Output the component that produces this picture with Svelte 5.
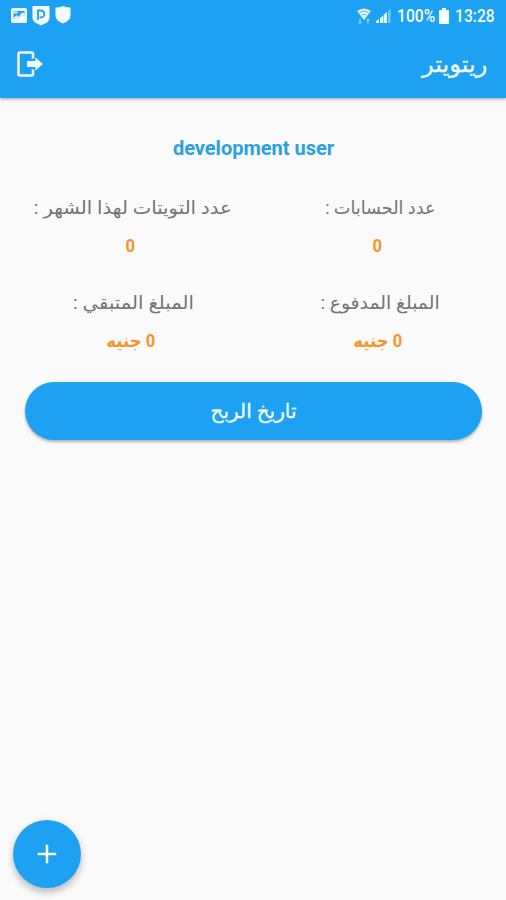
<script>
  const stats = [
    { label: 'عدد الحسابات :', value: '0', stretch: 0.98 },
    { label: 'عدد التويتات لهذا الشهر :', value: '0', stretch: 1.09 },
    { label: 'المبلغ المدفوع :', value: '0 جنيه', stretch: 1.045 },
    { label: 'المبلغ المتبقي :', value: '0 جنيه', stretch: 1.09 }
  ];
</script>

<div class="screen" dir="rtl">
  <header>
    <div class="status" dir="ltr">
      <div class="notices">
        <svg width="16" height="16" viewBox="0 0 16 16">
          <rect width="16" height="15" rx="2" fill="#f3faff" />
          <path d="M2.500 11.500V3h11v4.500L11 6.500l-3 3.500-2.500-1.500z" fill="#1da1f2" />
          <path d="M2.500 3.500h4v2h-4zM2.500 10l3-3 2.200 1.800L11 4.500l2.500.5v2.500L11 7l-3 4H2.500z" fill="#d8efff" />
        </svg>
        <svg width="18" height="20" viewBox="0 0 18 20">
          <path d="M.5 0h17v11.500q0 4-4.500 6l-4 2-4-2q-4.500-2-4.500-6z" fill="#f3faff" />
          <path d="M6 14V4.500H9a3.400 3.400 0 0 1 0 6.800H7.500" fill="none" stroke="#1da1f2" stroke-width="1.800" />
        </svg>
        <svg width="16" height="18" viewBox="0 0 16 18">
          <path d="M.5 1.500q4.500 0 7.500-1.500 3 1.500 7.500 1.500v8q0 5.500-7.500 8-7.500-2.500-7.500-8z" fill="#f3faff" />
        </svg>
      </div>
      <div class="system">
        <svg class="wifi" width="14" height="17" viewBox="0 0 14 17">
          <path d="M0 3q7-5 14 0L7 12z" fill="#e3f4ff" />
          <path d="M2.500 4.500q4.500-3 9 0M4.500 7q2.500-1.500 5 0" fill="none" stroke="#68bff5" />
          <path d="M3 11v4.500M1.500 14L3 15.500 4.500 14M11 15.500V11M9.500 12.500L11 11l1.500 1.500" fill="none" stroke="#b9e2fb" />
        </svg>
        <svg class="signal" width="15" height="14" viewBox="0 0 15 14">
          <path d="M0 14v-2l3-2v4zM4 14V9l3-2v7zM7.500 14V6L11 3v11z" fill="#eaf7ff" />
          <path d="M12 14V2l2.500-2v14z" fill="#79c7f7" />
        </svg>
        <span class="percent">100%</span>
        <svg class="battery" width="10" height="16" viewBox="0 0 10 16">
          <path d="M3 0h4v2h2q1 0 1 1v12q0 1-1 1H1q-1 0-1-1V3q0-1 1-1h2z" fill="#f6fbff" />
        </svg>
        <span class="clock">13:28</span>
      </div>
    </div>
    <div class="toolbar">
      <h1>ريتويتر</h1>
      <button class="exit" aria-label="خروج">
        <svg width="26" height="26" viewBox="0 0 26 26">
          <path d="M16 7.500V3q0-1.500-1.500-1.500H3Q1.500 1.500 1.500 3v20q0 1.500 1.500 1.500h11.500q1.500 0 1.500-1.500v-4.500" fill="none" stroke="#f3faff" stroke-width="2.600" />
          <path d="M10 10h8.500V6.500L26 13l-7.500 6.500V16H10z" fill="#f3faff" />
        </svg>
      </button>
    </div>
  </header>

  <main>
    <h2 dir="ltr">development user</h2>
    <section>
      {#each stats as stat}
        <div class="stat">
          <span class="label" style:transform="scaleX({stat.stretch})">{stat.label}</span>
          <strong>{stat.value}</strong>
        </div>
      {/each}
    </section>
    <button class="history"><span>تاريخ الربح</span></button>
  </main>

  <button class="fab" aria-label="إضافة">
    <svg width="20" height="20" viewBox="0 0 20 20">
      <path d="M10 .8v18.400M.8 10h18.400" stroke="#fff" stroke-width="2.500" />
    </svg>
  </button>
</div>

<style>
  :global(body) { background: #fafafa; }
  .screen {
    position: relative;
    height: 900px;
    overflow: hidden;
    background: #fafafa;
    font-family: Roboto, "DejaVu Sans", sans-serif;
  }
  button { border: 0; padding: 0; color: inherit; font-family: inherit; }
  svg { display: block; flex: none; }
  header {
    height: 98px;
    background: #1da1f2;
    color: #f3faff;
    box-shadow: 0 1px 3px rgba(0, 0, 0, .4);
  }
  .status {
    display: flex;
    justify-content: space-between;
    height: 32px;
    padding: 0 11px;
    box-sizing: border-box;
  }
  .notices { display: flex; gap: 5px; padding-top: 6px; }
  .notices svg:first-child { margin-top: 2px; }
  .system { display: flex; align-items: center; font: 500 18px/32px Roboto, sans-serif; }
  .wifi { margin-right: 5px; }
  .signal { margin-right: 6px; }
  .percent { width: 38px; margin-right: 4px; }
  .battery { margin-right: 6px; }
  .percent, .clock { transform-origin: left; white-space: nowrap; }
  .percent { transform: scaleX(.87); }
  .clock { width: 40px; transform: scaleX(.87); }
  .toolbar {
    display: flex;
    align-items: center;
    justify-content: space-between;
    height: 66px;
    padding: 0 19px 2px 17px;
    box-sizing: border-box;
  }
  h1 {
    margin: 0;
    padding-top: 2px;
    font-size: 23px;
    line-height: 30px;
    font-weight: 400;
    transform: scaleX(1.05);
    transform-origin: right;
    -webkit-text-stroke: .3px currentColor;
  }
  .exit { background: none; }
  main { display: flex; flex-direction: column; padding: 34px 24px 0 25px; }
  h2 {
    margin: 0;
    font-size: 20px;
    line-height: 32px;
    font-weight: 700;
    color: #2b9fe3;
    text-align: center;
  }
  section {
    display: grid;
    grid-template-columns: 247px 247px;
    row-gap: 19px;
    margin: 25px -19px 0 -18px;
  }
  .stat { display: flex; flex-direction: column; align-items: center; height: 76px; }
  .label {
    margin-right: -5px;
    font-size: 18px;
    line-height: 38px;
    color: #737373;
    white-space: nowrap;
  }
  strong {
    font-size: 18px;
    line-height: 38px;
    font-weight: 700;
    color: #f7942b;
    transform: scaleX(.92);
  }
  .history {
    height: 58px;
    margin-top: 22px;
    border-radius: 29px;
    background: #1da1f2;
    color: #f3faff;
    font-size: 20px;
    box-shadow: 0 2px 3px rgba(0, 0, 0, .3);
  }
  .history span { -webkit-text-stroke: .3px currentColor; }
  .fab {
    position: absolute;
    left: 13px;
    top: 820px;
    display: grid;
    place-items: center;
    width: 68px;
    height: 68px;
    border-radius: 50%;
    background: #1da1f2;
    box-shadow: 0 5px 7px rgba(0, 0, 0, .2), 0 1px 10px rgba(0, 0, 0, .08);
  }
</style>
